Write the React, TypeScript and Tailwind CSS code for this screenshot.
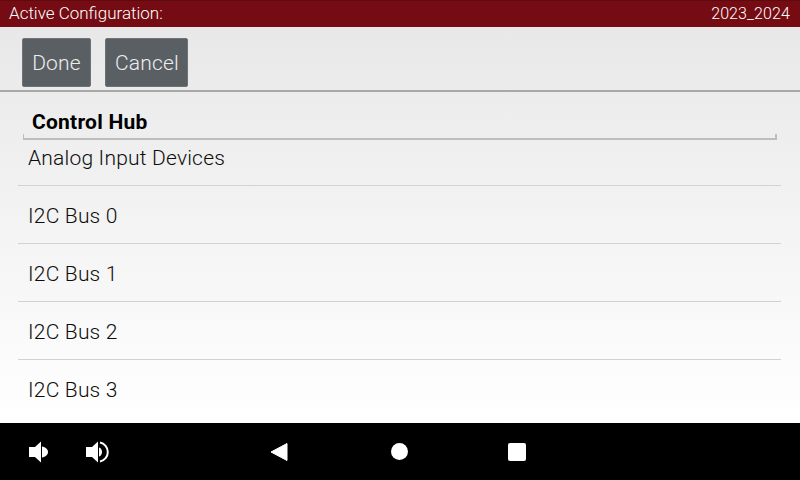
import React from 'react';

const rows = ['Analog Input Devices', 'I2C Bus 0', 'I2C Bus 1', 'I2C Bus 2', 'I2C Bus 3'];

const VolumeDown = () => (
  <svg width="24" height="24" viewBox="0 0 24 24">
    <path d="M2 7h6l6-5.500v21L8 17H2z" fill="#fff" />
    <path d="M15 6.500c3.500.5 6 2.700 6 5.500s-2.500 5-6 5.500z" fill="#fff" />
  </svg>
);

const VolumeUp = () => (
  <svg width="24" height="24" viewBox="0 0 24 24" fill="none">
    <path d="M1 7h6l6-5.500v21L7 17H1z" fill="#fff" />
    <path d="M14 7.500c2 .5 3 2.400 3 4.500s-1 4-3 4.500z" fill="#fff" />
    <path d="M15 2.500c4.500 1 7.800 4.800 7.800 9.500s-3.300 8.500-7.800 9.500" stroke="#fff" strokeWidth="2" />
  </svg>
);

export default function App() {
  return (
    <div className="w-[800px] h-[480px] flex flex-col overflow-hidden font-['Roboto',sans-serif] font-light">
      {/* title bar */}
      <div className="h-[27px] shrink-0 flex items-center justify-between pl-[9px] pr-[10px] bg-[#750c13] border-t border-[#5e0a10] text-white">
        <span className="text-[17px]">Active Configuration:</span>
        <span className="text-[16px] tracking-[0.1px]">2023_2024</span>
      </div>

      <div className="flex-1 flex flex-col bg-gradient-to-b from-[#e8e8e8] to-white">
        {/* buttons */}
        <div className="h-[65px] shrink-0 flex items-start gap-[14px] pl-[22px] pt-[11px] border-b-2 border-[#a8a8a8]">
          <button className="h-[49px] w-[69px] pt-[2px] rounded-[2px] bg-[#5a5f63] border border-[#6e7276] text-[#eceeee] text-[21px] font-light tracking-[0.2px]">Done</button>
          <button className="h-[49px] w-[83px] pt-[2px] pl-[1px] rounded-[2px] bg-[#5a5f63] border border-[#6e7276] text-[#eceeee] text-[21px] font-light tracking-[0.2px]">Cancel</button>
        </div>

        {/* section header */}
        <div className="ml-[23px] mr-[23px] mt-[16px] h-[32px] shrink-0 flex items-start pl-[9px] border-b-2 border-[#bdbdbd] text-black text-[21px] font-bold leading-[28px] tracking-[0.25px] relative">
          Control Hub
          <span className="absolute left-0 bottom-0 w-[1px] h-[4px] bg-[#bdbdbd]" />
          <span className="absolute right-0 bottom-0 w-[2px] h-[4px] bg-[#bdbdbd]" />
        </div>

        {/* list */}
        <div className="ml-[18px] mr-[19px] flex flex-col">
          {rows.map((label, i) => (
            <div
              key={label}
              className={`flex items-center pl-[10px] text-[21px] text-[#0c0c0c] tracking-[0.2px] ${
                i === 0 ? 'h-[46px] pb-[8px]' : 'h-[58px] pt-[4px]'
              } ${i < rows.length - 1 ? 'border-b border-[#d2d2d2]' : ''}`}
            >
              {label}
            </div>
          ))}
        </div>
      </div>

      {/* nav bar */}
      <div className="h-[57px] shrink-0 bg-black flex items-center relative">
        <div className="flex items-center gap-[34px] pl-[27px]">
          <VolumeDown />
          <VolumeUp />
        </div>
        <div className="absolute left-[270px] top-0 h-full flex items-center">
          <svg width="18" height="20" viewBox="0 0 18 20"><path d="M1 10 17 1.500v17z" fill="#fff" stroke="#fff" strokeLinejoin="round" /></svg>
          <span className="ml-[103px] w-[17px] h-[17px] rounded-full bg-white" />
          <span className="ml-[100px] w-[18px] h-[18px] rounded-[2px] bg-white" />
        </div>
      </div>
    </div>
  );
}
